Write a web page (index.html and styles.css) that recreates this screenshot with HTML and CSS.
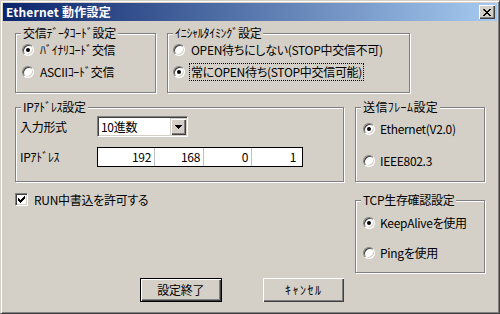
FILE: index.html
```html
<!DOCTYPE html>
<html lang="ja">
<head>
<meta charset="utf-8">
<title>Ethernet 動作設定</title>
<link rel="stylesheet" href="styles.css">
</head>
<body>
<div class="window">
  <div class="titlebar">
    <span class="title">Ethernet 動作設定</span>
    <span class="close-btn">
      <svg width="8" height="7" viewBox="0 0 8 7"><path d="M0 0h2v1h1v1h2v-1h1v-1h2v1h-1v1h-1v1h-1v1h1v1h1v1h1v1h-2v-1h-1v-1h-2v1h-1v1h-2v-1h1v-1h1v-1h1v-1h-1v-1h-1z" fill="#000"/></svg>
    </span>
  </div>
  <div class="client">
    <div class="row row-top">
      <div class="group group-code">
        <span class="legend">交信ﾃﾞｰﾀｺｰﾄﾞ設定</span>
        <div class="opts opts-code">
          <div class="opt"><span class="radio on"></span><span class="opt-text">ﾊﾞｲﾅﾘｺｰﾄﾞ交信</span></div>
          <div class="opt"><span class="radio"></span><span class="opt-text">ASCIIｺｰﾄﾞ交信</span></div>
        </div>
      </div>
      <div class="group group-init">
        <span class="legend">ｲﾆｼｬﾙﾀｲﾐﾝｸﾞ設定</span>
        <div class="opts opts-init">
          <div class="opt"><span class="radio"></span><span class="opt-text">OPEN待ちにしない(STOP中交信不可)</span></div>
          <div class="opt"><span class="radio on"></span><span class="opt-text focus">常にOPEN待ち(STOP中交信可能)</span></div>
        </div>
      </div>
    </div>
    <div class="row row-mid">
      <div class="group group-ip">
        <span class="legend">IPｱﾄﾞﾚｽ設定</span>
        <div class="field-row">
          <span class="field-label">入力形式</span>
          <div class="combo">
            <span class="combo-text">10進数</span>
            <span class="combo-btn"><svg width="7" height="4" viewBox="0 0 7 4"><path d="M0 0h7v1h-1v1h-1v1h-1v1h-1v-1h-1v-1h-1v-1h-1z" fill="#000"/></svg></span>
          </div>
        </div>
        <div class="field-row field-row-ip">
          <span class="field-label">IPｱﾄﾞﾚｽ</span>
          <div class="ipbox">
            <span class="seg seg1">192</span>
            <span class="seg seg2">168</span>
            <span class="seg seg3">0</span>
            <span class="seg seg4">1</span>
          </div>
        </div>
      </div>
      <div class="group group-frame">
        <span class="legend legend-wide">送信ﾌﾚｰﾑ設定</span>
        <div class="opts opts-frame">
          <div class="opt"><span class="radio on"></span><span class="opt-text">Ethernet(V2.0)</span></div>
          <div class="opt"><span class="radio"></span><span class="opt-text">IEEE802.3</span></div>
        </div>
      </div>
    </div>
    <div class="row row-bottom">
      <div class="left-col">
        <div class="check-row">
          <span class="checkbox"><svg width="7" height="7" viewBox="0 0 7 7"><path d="M0 2h1v1h1v1h1v-1h1v-1h1v-1h1v-1h1v3h-1v1h-1v1h-1v1h-1v1h-1v-1h-1v-1h-1z" fill="#000"/></svg></span>
          <span class="check-text">RUN中書込を許可する</span>
        </div>
        <div class="buttons">
          <span class="btn btn-default">設定終了</span>
          <span class="btn btn-kana">ｷｬﾝｾﾙ</span>
        </div>
      </div>
      <div class="group group-tcp">
        <span class="legend">TCP生存確認設定</span>
        <div class="opts opts-tcp">
          <div class="opt"><span class="radio on"></span><span class="opt-text">KeepAliveを使用</span></div>
          <div class="opt"><span class="radio"></span><span class="opt-text">Pingを使用</span></div>
        </div>
      </div>
    </div>
  </div>
</div>
</body>
</html>
```
FILE: styles.css
```css
html, body {
  margin: 0;
  padding: 0;
  background: #d4d0c8;
}
body {
  font-family: "Noto Sans CJK JP", "Liberation Sans", sans-serif;
  font-size: 12px;
  line-height: 12px;
  color: #000;
  font-feature-settings: "palt";
  letter-spacing: -0.3px;
}
.window {
  width: 500px;
  height: 314px;
  box-sizing: border-box;
  padding: 0;
  border: 1px solid;
  border-color: #d4d0c8 #404040 #404040 #d4d0c8;
  background: #d4d0c8;
  box-shadow: inset 1px 1px 0 #fff, inset -1px -1px 0 #808080;
  overflow: hidden;
}
.titlebar {
  margin: 2px 2px 0 2px;
  height: 18px;
  display: flex;
  align-items: center;
  justify-content: space-between;
  padding: 0 2px 0 3px;
  background: linear-gradient(to right, #0a246a, #a6caf0);
}
.title {
  color: #fff;
  font-weight: bold;
  font-size: 12px;
  letter-spacing: 0.2px;
}
.close-btn {
  width: 16px;
  height: 14px;
  box-sizing: border-box;
  background: #d4d0c8;
  display: flex;
  align-items: center;
  justify-content: center;
  box-shadow: inset 1px 1px 0 #fff, inset -1px -1px 0 #404040, inset -2px -2px 0 #808080;
  padding-right: 1px;
}
.close-btn svg { display: block; }
.client {
  padding: 12px 0 0 14px;
}
.row {
  display: flex;
  gap: 11px;
}
.row-mid { margin-top: 14px; }
.group {
  position: relative;
  box-sizing: border-box;
  border: 1px solid #808080;
  box-shadow: 1px 1px 0 #fff, inset 1px 1px 0 #fff;
}
.legend {
  position: absolute;
  top: -7px;
  left: 5px;
  padding: 0 2px;
  background: #d4d0c8;
  line-height: 12px;
  white-space: nowrap;
}
.legend-wide { letter-spacing: 0.4px; }
.group-code { width: 141px; height: 60px; }
.group-init { width: 243px; height: 60px; }
.group-ip { width: 329px; height: 75px; padding: 8px 0 0 3px; }
.group-frame { width: 130px; height: 75px; }
.group-tcp { width: 130px; height: 73px; margin-top: 18px; }

.opts {
  display: flex;
  flex-direction: column;
}
.opts-code { padding: 10px 0 0 6px; gap: 10px; }
.opts-init { padding: 10px 0 0 5px; gap: 10px; }
.opts-frame { padding: 15px 0 0 7px; gap: 20px; }
.opts-tcp { padding: 16px 0 0 7px; gap: 18px; }

.opt {
  display: flex;
  align-items: center;
  height: 12px;
  gap: 6px;
  white-space: nowrap;
}
.opts-frame .opt, .opts-tcp .opt { gap: 5px; }
.radio {
  position: relative;
  width: 12px;
  height: 12px;
  box-sizing: border-box;
  flex: none;
  border-radius: 50%;
  background: #fff;
  border: 1px solid;
  border-color: #808080 #fff #fff #808080;
  box-shadow: inset 1px 1px 0 #404040, inset -1px -1px 0 #d4d0c8;
}
.radio.on::after {
  content: "";
  position: absolute;
  left: 3px;
  top: 3px;
  width: 4px;
  height: 4px;
  border-radius: 50%;
  background: #000;
}
.opt-text { line-height: 14px; }
.focus {
  outline: 1px dotted #000;
  outline-offset: 1px;
}

.field-row {
  display: flex;
  align-items: center;
  height: 21px;
}
.field-row-ip { margin-top: 10px; height: 20px; }
.field-label {
  width: 77px;
  flex: none;
  padding-left: 1px;
}
.combo {
  width: 91px;
  height: 21px;
  box-sizing: border-box;
  background: #fff;
  border: 1px solid;
  border-color: #808080 #fff #fff #808080;
  box-shadow: inset 1px 1px 0 #404040, inset -1px -1px 0 #d4d0c8;
  display: flex;
  align-items: center;
  justify-content: space-between;
  padding: 1px 1px 1px 3px;
}
.combo-btn {
  width: 16px;
  height: 17px;
  box-sizing: border-box;
  background: #d4d0c8;
  display: flex;
  align-items: center;
  justify-content: center;
  box-shadow: inset 1px 1px 0 #d4d0c8, inset 2px 2px 0 #fff, inset -1px -1px 0 #404040, inset -2px -2px 0 #808080;
}
.combo-btn svg { display: block; }
.ipbox {
  width: 206px;
  height: 20px;
  box-sizing: border-box;
  border: 1px solid #000;
  background: #fff;
  display: flex;
}
.seg {
  box-sizing: border-box;
  text-align: right;
  padding-right: 3px;
  line-height: 18px;
  border-right: 1px solid #c0c0c0;
}
.seg1 { width: 57px; }
.seg2 { width: 49px; }
.seg3 { width: 48px; }
.seg4 { width: 48px; border-right: 0; padding-right: 4px; }

.left-col {
  width: 329px;
  display: flex;
  flex-direction: column;
}
.check-row {
  display: flex;
  align-items: center;
  gap: 6px;
  margin-top: 11px;
  height: 13px;
}
.checkbox {
  width: 13px;
  height: 13px;
  box-sizing: border-box;
  flex: none;
  background: #fff;
  border: 1px solid;
  border-color: #808080 #fff #fff #808080;
  box-shadow: inset 1px 1px 0 #404040, inset -1px -1px 0 #d4d0c8;
  display: flex;
  align-items: center;
  justify-content: center;
}
.checkbox svg { display: block; }
.buttons {
  display: flex;
  gap: 41px;
  margin-top: 72px;
  padding-left: 125px;
}
.btn {
  width: 88px;
  height: 24px;
  box-sizing: border-box;
  display: flex;
  align-items: center;
  justify-content: center;
  background: #d4d0c8;
  box-shadow: inset 1px 1px 0 #fff, inset -1px -1px 0 #404040, inset -2px -2px 0 #808080;
}
.btn-default {
  border: 1px solid #000;
}
.btn-kana {
  letter-spacing: 1.5px;
  padding-left: 1px;
}
```
